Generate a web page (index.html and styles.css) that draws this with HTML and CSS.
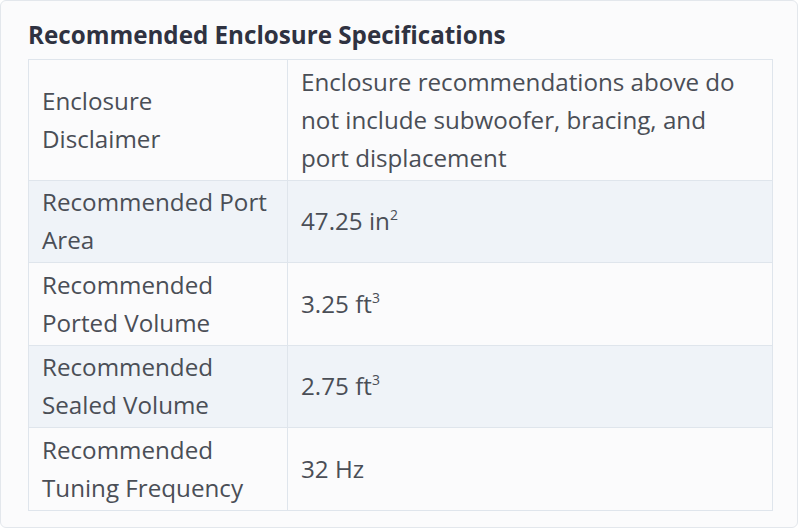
FILE: index.html
```html
<!DOCTYPE html>
<html lang="en">
<head>
    <meta charset="UTF-8">
    <title>Recommended Enclosure Specifications</title>
    <link rel="stylesheet" href="styles.css">
</head>
<body>
<div class="card">
    <h2 class="title">Recommended Enclosure Specifications</h2>
    <table class="specs">
        <tbody>
        <tr>
            <td class="label">Enclosure Disclaimer</td>
            <td>Enclosure recommendations above do not include subwoofer, bracing, and port displacement</td>
        </tr>
        <tr class="alt">
            <td class="label">Recommended Port Area</td>
            <td>47.25 in<sup>2</sup></td>
        </tr>
        <tr>
            <td class="label">Recommended Ported Volume</td>
            <td>3.25 ft<sup>3</sup></td>
        </tr>
        <tr class="alt">
            <td class="label">Recommended Sealed Volume</td>
            <td>2.75 ft<sup>3</sup></td>
        </tr>
        <tr>
            <td class="label">Recommended Tuning Frequency</td>
            <td>32 Hz</td>
        </tr>
        </tbody>
    </table>
</div>
</body>
</html>
```

FILE: styles.css
```css
body {
    margin: 0;
    background: #ffffff;
    font-family: "Open Sans", "Noto Sans", sans-serif;
}
.card {
    width: 798px;
    height: 528px;
    box-sizing: border-box;
    border: 1px solid #e3e7ec;
    border-radius: 6px;
    background: #fbfbfc;
    padding: 18px 24px 0 27px;
}
.title {
    margin: 0 0 8px;
    font-size: 24.2px;
    line-height: 32px;
    font-weight: 700;
    color: #2f3241;
}
.specs {
    width: 745px;
    border-collapse: collapse;
    color: #4a4e56;
    font-size: 24.2px;
    line-height: 38px;
}
.specs td {
    border: 1px solid #dfe5ec;
    padding: 2.5px 13px 3px;
    vertical-align: middle;
    text-align: left;
}
.specs td.label {
    width: 228px;
    padding-right: 17px;
}
.specs tr.alt td {
    background: #eff3f8;
}
.specs sup {
    font-size: 14px;
    line-height: 0;
    vertical-align: 10px;
}
```
